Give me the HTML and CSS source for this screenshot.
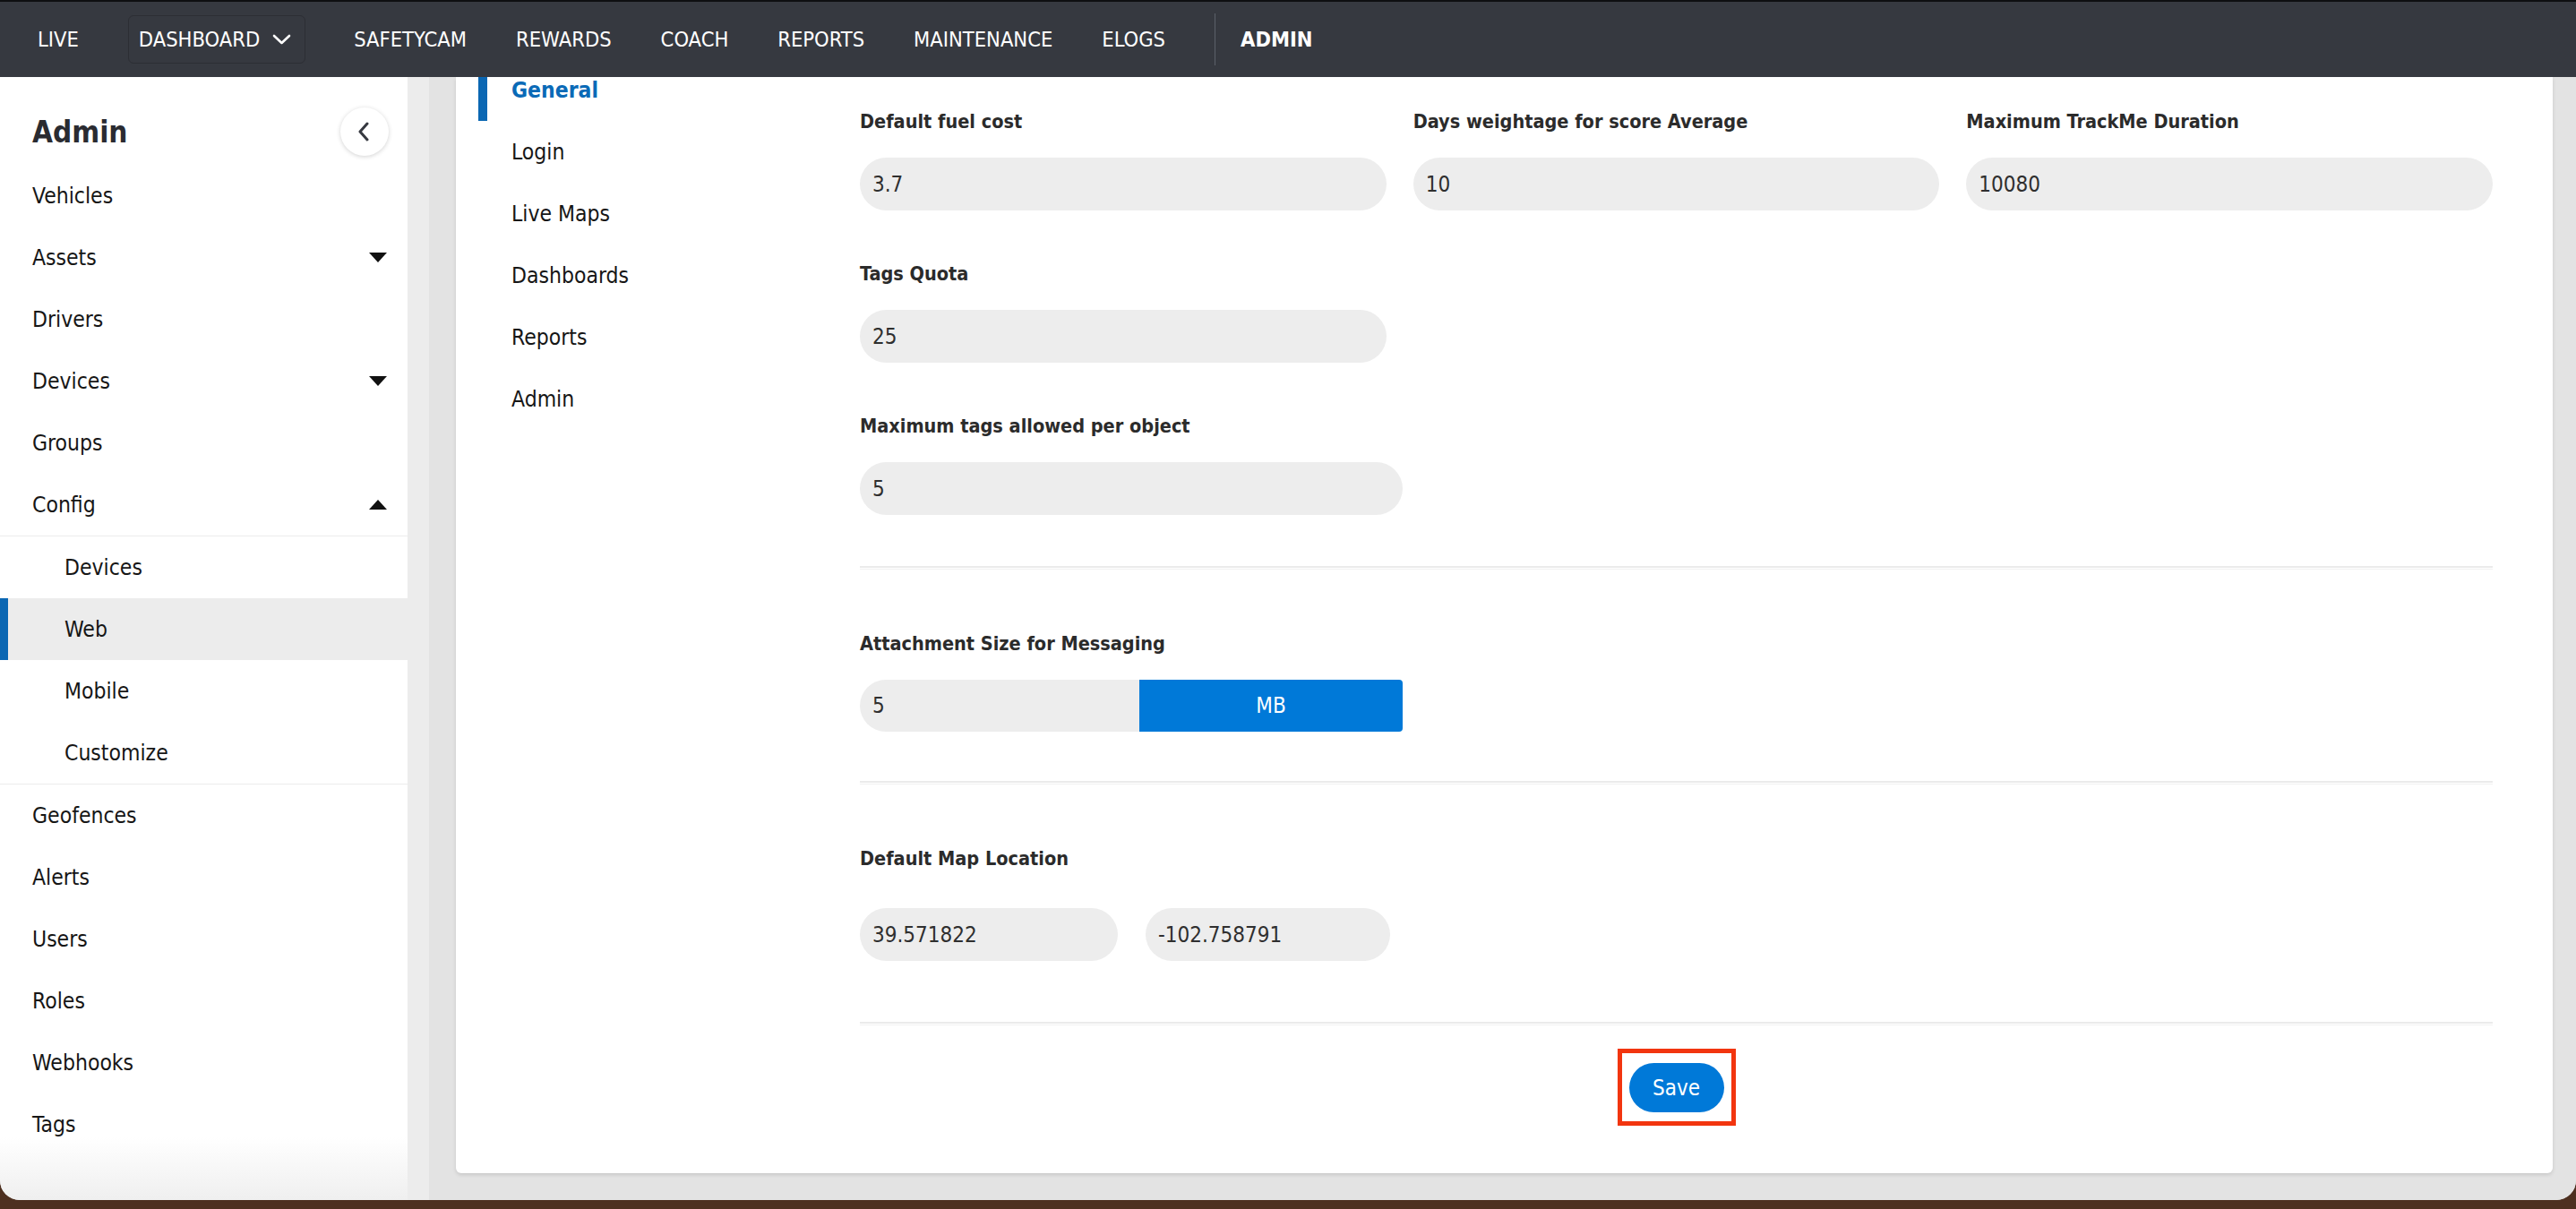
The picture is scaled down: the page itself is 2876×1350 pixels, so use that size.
FILE: index.html
```html
<!DOCTYPE html>
<html lang="en">
<head>
  <meta charset="UTF-8" />
  <title>Admin - Web Config</title>
  <link rel="stylesheet" href="styles.css">
</head>
<body>
<div class="window">

  <header class="topnav">
    <a class="nav-item">LIVE</a>
    <a class="nav-item nav-dropdown">DASHBOARD
      <svg width="21" height="12" viewBox="0 0 21 12"><path d="M2 2 L10.5 10 L19 2" fill="none" stroke="#fff" stroke-width="2.6" stroke-linecap="round" stroke-linejoin="round"/></svg>
    </a>
    <a class="nav-item">SAFETYCAM</a>
    <a class="nav-item">REWARDS</a>
    <a class="nav-item">COACH</a>
    <a class="nav-item">REPORTS</a>
    <a class="nav-item">MAINTENANCE</a>
    <a class="nav-item">ELOGS</a>
    <a class="nav-item nav-admin">ADMIN</a>
  </header>

  <div class="app">

    <aside class="sidebar">
      <div class="sidebar-head">
        <h1>Admin</h1>
        <button class="collapse-btn">
          <svg width="14" height="22" viewBox="0 0 14 22"><path d="M11 2 L3 11 L11 20" fill="none" stroke="#363940" stroke-width="3" stroke-linecap="round" stroke-linejoin="round"/></svg>
        </button>
      </div>

      <a class="side-item">Vehicles</a>
      <a class="side-item">Assets <span class="caret down"></span></a>
      <a class="side-item">Drivers</a>
      <a class="side-item">Devices <span class="caret down"></span></a>
      <a class="side-item">Groups</a>
      <a class="side-item">Config <span class="caret up"></span></a>
      <div class="side-sub">
        <a class="side-item">Devices</a>
        <a class="side-item active">Web</a>
        <a class="side-item">Mobile</a>
        <a class="side-item">Customize</a>
      </div>
      <a class="side-item">Geofences</a>
      <a class="side-item">Alerts</a>
      <a class="side-item">Users</a>
      <a class="side-item">Roles</a>
      <a class="side-item">Webhooks</a>
      <a class="side-item">Tags</a>
    </aside>

    <main class="content">
      <div class="card">

        <nav class="subnav">
          <a class="sub-item active">General</a>
          <a class="sub-item">Login</a>
          <a class="sub-item">Live Maps</a>
          <a class="sub-item">Dashboards</a>
          <a class="sub-item">Reports</a>
          <a class="sub-item">Admin</a>
        </nav>

        <form class="settings">
          <div class="grid">
            <div class="field">
              <label>Default fuel cost</label>
              <input class="pill" type="text" value="3.7">
            </div>
            <div class="field">
              <label>Days weightage for score Average</label>
              <input class="pill" type="text" value="10">
            </div>
            <div class="field">
              <label>Maximum TrackMe Duration</label>
              <input class="pill" type="text" value="10080">
            </div>
            <div class="field">
              <label>Tags Quota</label>
              <input class="pill" type="text" value="25">
            </div>
          </div>

          <div class="field field-wide">
            <label>Maximum tags allowed per object</label>
            <input class="pill" type="text" value="5">
          </div>

          <hr class="divider">

          <div class="field section">
            <label>Attachment Size for Messaging</label>
            <div class="input-group">
              <input type="text" value="5">
              <span class="unit">MB</span>
            </div>
          </div>

          <hr class="divider divider-tight">

          <div class="field section">
            <label class="label-loose">Default Map Location</label>
            <div class="coords">
              <input class="pill lat" type="text" value="39.571822">
              <input class="pill lng" type="text" value="-102.758791">
            </div>
          </div>

          <hr class="divider divider-loose">

          <div class="actions">
            <span class="highlight"><button type="button" class="save-btn">Save</button></span>
          </div>
        </form>

      </div>
    </main>

  </div>
</div>
</body>
</html>
```

FILE: styles.css
```css
* {
  box-sizing: border-box;
}

body {
  margin: 0;
  height: 1350px;
  overflow: hidden;
  background-color: #4e3020;
  font-family: "DejaVu Sans Condensed", "DejaVu Sans", sans-serif;
  font-stretch: condensed;
  color: #161616;
}

a {
  color: inherit;
  text-decoration: none;
}

.window {
  height: 1340px;
  display: flex;
  flex-direction: column;
  background-color: #e4e4e4;
  border-radius: 0 0 22px 22px;
  overflow: hidden;
}

/* top navigation */

.topnav {
  height: 86px;
  flex-shrink: 0;
  display: flex;
  align-items: center;
  gap: 55px;
  padding-left: 42px;
  background-color: #363940;
  border-top: 2px solid #0e0f11;
  color: #fff;
  font-size: 23.5px;
}

.nav-dropdown {
  display: flex;
  align-items: center;
  gap: 14px;
  height: 54px;
  margin-right: -1px;
  padding: 0 15px 0 11px;
  border: 1px solid #2c2e34;
  border-radius: 6px;
}

.nav-admin {
  display: flex;
  align-items: center;
  height: 58px;
  padding-left: 28px;
  border-left: 1px solid #5c6069;
  font-weight: bold;
}

.app {
  flex: 1;
  display: flex;
  min-height: 0;
  overflow: hidden;
}

/* left sidebar */

.sidebar {
  width: 455px;
  flex-shrink: 0;
  background: linear-gradient(to bottom, #fff calc(100% - 70px), #efefef);
  font-size: 24.5px;
}

.sidebar-head {
  display: flex;
  align-items: center;
  justify-content: space-between;
  height: 54px;
  margin: 34px 21px 10px 36px;
}

.sidebar-head h1 {
  margin: 0;
  font-size: 33px;
  color: #2a2b31;
}

.collapse-btn {
  width: 54px;
  height: 54px;
  display: flex;
  align-items: center;
  justify-content: center;
  padding: 0 2px 0 0;
  border: none;
  border-radius: 50%;
  background-color: #fff;
  box-shadow: 0 1px 5px rgba(0, 0, 0, 0.18);
}

.side-item {
  display: flex;
  align-items: center;
  justify-content: space-between;
  height: 69px;
  padding: 0 23px 0 36px;
}

.caret {
  width: 0;
  height: 0;
  border-left: 10px solid transparent;
  border-right: 10px solid transparent;
}

.caret.down {
  border-top: 11px solid #111;
}

.caret.up {
  border-bottom: 11px solid #111;
}

.side-sub {
  border-top: 1px solid #ececec;
  border-bottom: 1px solid #ececec;
}

.side-sub .side-item {
  padding-left: 72px;
}

.side-item.active {
  background-color: #ececec;
  box-shadow: inset 9px 0 0 #0b67b3;
}

/* main area */

.content {
  flex: 1;
  padding: 0 26px 30px 54px;
  background: linear-gradient(to right, #ececec 0 24px, #e3e3e3 24px);
}

.card {
  height: 100%;
  display: flex;
  background-color: #fff;
  border-radius: 0 0 6px 6px;
  box-shadow: 0 2px 4px rgba(0, 0, 0, 0.12);
}

.subnav {
  width: 451px;
  flex-shrink: 0;
  margin-top: -20px;
  font-size: 24.5px;
}

.sub-item {
  display: flex;
  align-items: center;
  height: 69px;
  margin-left: 25px;
  padding-left: 37px;
}

.sub-item.active {
  color: #0a6ab7;
  font-weight: bold;
  border-left: 10px solid #0b67b3;
  padding-left: 27px;
}

.settings {
  flex: 1;
  padding: 35px 67px 0 0;
}

.grid {
  display: grid;
  grid-template-columns: repeat(3, 1fr);
  column-gap: 30px;
  row-gap: 56px;
}

.field label {
  display: block;
  height: 30px;
  line-height: 30px;
  margin-bottom: 25px;
  font-size: 21.5px;
  font-weight: bold;
  color: #2b2b2b;
}

.field label.label-loose {
  margin-bottom: 40px;
}

.field-wide {
  width: 606px;
  margin-top: 56px;
}

.section {
  margin-top: 68px;
}

input {
  font-family: inherit;
  font-stretch: condensed;
  font-size: 24px;
  color: #2f2f2f;
  outline: none;
}

.pill {
  display: block;
  width: 100%;
  height: 59px;
  padding: 0 14px;
  border: none;
  border-radius: 30px;
  background-color: #ededed;
}

.input-group {
  display: flex;
  width: 606px;
  height: 58px;
}

.input-group input {
  width: 312px;
  padding: 0 14px;
  border: none;
  border-radius: 30px 0 0 30px;
  background-color: #ededed;
}

.unit {
  flex: 1;
  display: flex;
  align-items: center;
  justify-content: center;
  background-color: #0079d8;
  border-radius: 0 4px 4px 0;
  color: #fff;
  font-size: 24px;
}

.coords {
  display: flex;
  gap: 31px;
}

.coords .lat {
  width: 288px;
}

.coords .lng {
  width: 273px;
}

.divider {
  height: 4px;
  margin: 57px 0 0;
  border: none;
  border-top: 2px solid #ebebeb;
  border-bottom: 1px solid #f1f1f1;
}

.divider-tight {
  margin-top: 55px;
}

.divider-loose {
  margin-top: 68px;
}

.actions {
  display: flex;
  justify-content: center;
  margin-top: 26px;
}

.highlight {
  display: inline-block;
  padding: 11px 8px 10px;
  border: 5px solid #f2350f;
}

.save-btn {
  display: block;
  width: 106px;
  height: 55px;
  border: none;
  border-radius: 28px;
  background-color: #0079d8;
  color: #fff;
  font-family: inherit;
  font-stretch: condensed;
  font-size: 24px;
}
```
